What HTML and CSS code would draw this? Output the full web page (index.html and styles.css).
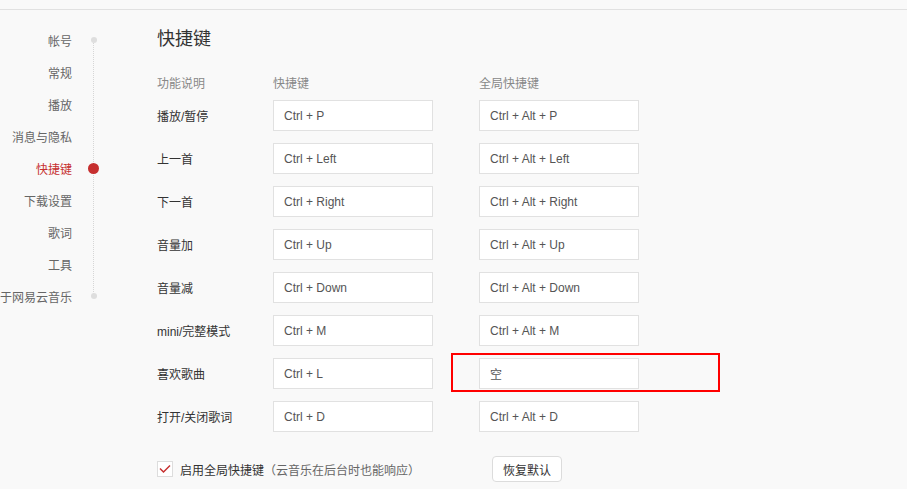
FILE: index.html
```html
<!DOCTYPE html>
<html lang="zh-CN">
<head>
<meta charset="utf-8">
<title>设置 - 快捷键</title>
<link rel="stylesheet" href="styles.css">
</head>
<body>
<div class="topbar"></div>
<div class="page">
  <nav class="side">
    <ul class="side-list">
      <li class="side-item dot"><span>帐号</span></li>
      <li class="side-item"><span>常规</span></li>
      <li class="side-item"><span>播放</span></li>
      <li class="side-item"><span>消息与隐私</span></li>
      <li class="side-item active"><span>快捷键</span></li>
      <li class="side-item"><span>下载设置</span></li>
      <li class="side-item"><span>歌词</span></li>
      <li class="side-item"><span>工具</span></li>
      <li class="side-item dot"><span>关于网易云音乐</span></li>
    </ul>
  </nav>
  <main class="content">
    <h1 class="title">快捷键</h1>
    <div class="keys-head">
      <div>功能说明</div><div>快捷键</div><div>全局快捷键</div>
    </div>
    <div class="keys">
      <div class="label">播放/暂停</div><div class="box">Ctrl + P</div><div class="box">Ctrl + Alt + P</div>
      <div class="label">上一首</div><div class="box">Ctrl + Left</div><div class="box">Ctrl + Alt + Left</div>
      <div class="label">下一首</div><div class="box">Ctrl + Right</div><div class="box">Ctrl + Alt + Right</div>
      <div class="label">音量加</div><div class="box">Ctrl + Up</div><div class="box">Ctrl + Alt + Up</div>
      <div class="label">音量减</div><div class="box">Ctrl + Down</div><div class="box">Ctrl + Alt + Down</div>
      <div class="label">mini/完整模式</div><div class="box">Ctrl + M</div><div class="box">Ctrl + Alt + M</div>
      <div class="label">喜欢歌曲</div><div class="box">Ctrl + L</div><div class="box marked">空<span class="mark"></span></div>
      <div class="label">打开/关闭歌词</div><div class="box">Ctrl + D</div><div class="box">Ctrl + Alt + D</div>
    </div>
    <div class="footer">
      <label class="check">
        <span class="checkbox">
          <svg width="12" height="10" viewBox="0 0 12 10"><path d="M1 4.5 L4.5 8 L11 1.5" fill="none" stroke="#c62f2f" stroke-width="1.5"/></svg>
        </span>
        <span class="check-text">启用全局快捷键</span><span class="check-note">（云音乐在后台时也能响应）</span>
      </label>
      <button class="reset">恢复默认</button>
    </div>
  </main>
</div>
</body>
</html>
```
FILE: styles.css
```css
* { box-sizing: border-box; }

html, body {
  margin: 0;
  padding: 0;
  background: #f9f9f9;
  font-family: "Liberation Sans", "Noto Sans CJK SC", sans-serif;
  font-size: 12px;
  color: #333;
  overflow: hidden;
}

.topbar {
  height: 10px;
  border-bottom: 1px solid #e1e1e1;
}

.page {
  display: flex;
}

/* left navigation with dotted track */
.side {
  width: 157px;
  flex: none;
  padding-top: 14px;
}

.side-list {
  list-style: none;
  margin: 0;
  padding: 0;
  position: relative;
  width: 100px;
}

.side-list::before {
  content: "";
  position: absolute;
  left: 93px;
  top: 16px;
  bottom: 16px;
  border-left: 1px dotted #d6d6d6;
}

.side-item {
  height: 32px;
  display: flex;
  align-items: center;
  justify-content: flex-end;
  width: 72px;
  white-space: nowrap;
  color: #666;
  position: relative;
}

.side-item.active { color: #c62f2f; }

.side-item.dot::after,
.side-item.active::after {
  content: "";
  position: absolute;
  border-radius: 50%;
}

.side-item.dot::after {
  width: 6px;
  height: 6px;
  left: 90.5px;
  top: 13px;
  background: #dedede;
}

.side-item.active::after {
  width: 11px;
  height: 11px;
  left: 88px;
  top: 10.5px;
  background: #c62f2f;
}

/* content */
.content {
  flex: 1;
  padding-top: 17px;
}

.title {
  margin: 0;
  font-size: 18px;
  font-weight: normal;
  line-height: 24px;
  color: #333;
}

.keys-head,
.keys {
  display: grid;
  grid-template-columns: 116px 206px 160px;
}

.keys-head {
  margin-top: 23px;
  line-height: 20px;
  color: #888;
}

.keys {
  grid-auto-rows: 31px;
  row-gap: 12px;
  margin-top: 6px;
}

.label {
  display: flex;
  align-items: center;
  white-space: nowrap;
}

.box {
  width: 160px;
  background: #fff;
  border: 1px solid #e1e1e1;
  display: flex;
  align-items: center;
  padding-left: 10px;
  color: #555;
}

.box.marked { position: relative; }

.mark {
  position: absolute;
  left: -29px;
  top: -6px;
  width: 269px;
  height: 39px;
  border: 2px solid #f00;
}

.footer {
  display: flex;
  align-items: center;
  margin-top: 24px;
}

.check {
  display: flex;
  align-items: center;
}

.checkbox {
  width: 16px;
  height: 16px;
  border: 1px solid #ddd;
  background: #fff;
  display: flex;
  align-items: center;
  justify-content: center;
  margin-right: 7px;
}

.check-text { color: #333; }
.check-note { color: #666; }

.reset {
  margin-left: 72px;
  width: 70px;
  height: 26px;
  border: 1px solid #dcdcdc;
  border-radius: 4px;
  background: #fff;
  font-family: inherit;
  font-size: 12px;
  color: #333;
  padding: 0;
}
```
